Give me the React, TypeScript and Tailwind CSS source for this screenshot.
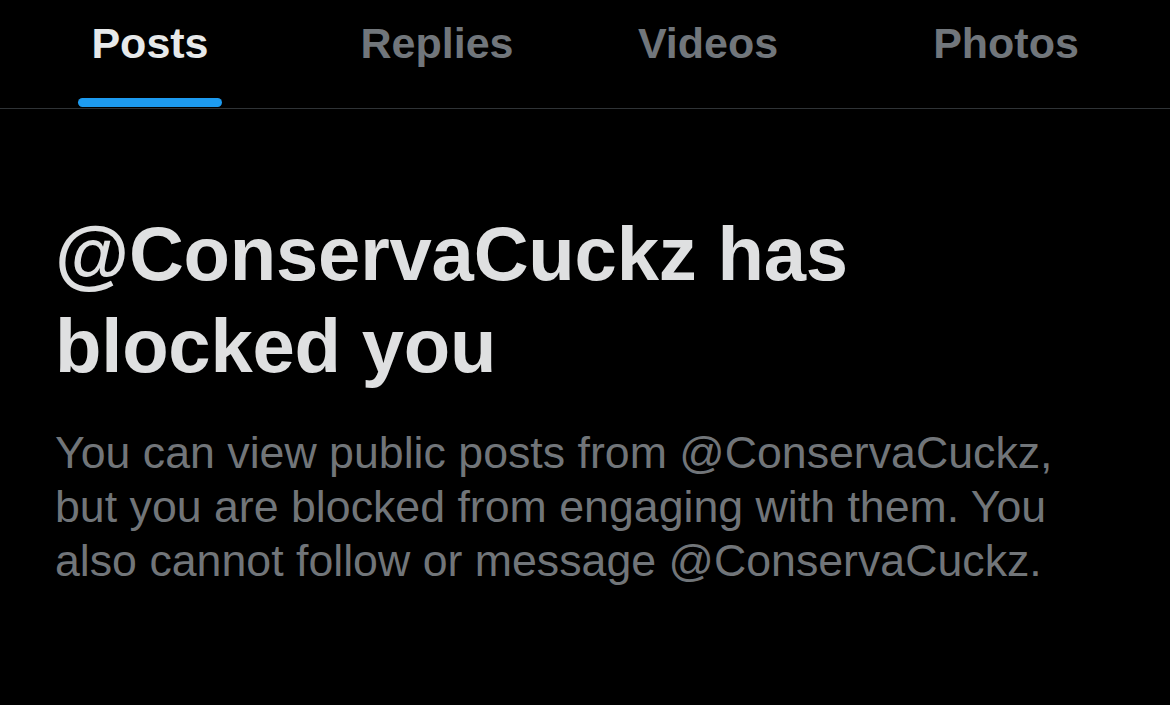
import React from 'react';

const tabs = [
  { label: 'Posts', width: 'w-[300px]', active: true },
  { label: 'Replies', width: 'w-[274px]', active: false },
  { label: 'Videos', width: 'w-[268px]', active: false },
  { label: 'Photos', width: 'flex-1', active: false },
];

const handle = '@ConservaCuckz';

export default function App() {
  return (
    <div className="w-[1170px] h-[705px] bg-black overflow-hidden font-['Liberation_Sans',Arial,sans-serif]">
      {/* Profile tabs */}
      <div className="flex h-[109px] border-b border-[#2f3336]">
        {tabs.map((tab) => (
          <div key={tab.label} className={`${tab.width} flex flex-col items-center justify-between`}>
            <span
              className={`pt-[22px] text-[43px] leading-none font-bold ${
                tab.active ? 'text-[#e7e9ea]' : 'text-[#71767b]'
              }`}
            >
              {tab.label}
            </span>
            {tab.active ? (
              <div className="w-[144px] h-[9px] mb-[1px] rounded-full bg-[#1d9bf0]" />
            ) : (
              <div className="h-[9px]" />
            )}
          </div>
        ))}
      </div>

      {/* Blocked notice */}
      <div className="px-[55px] pt-[99px]">
        <h1 className="text-[76px] leading-[92px] font-bold text-[#dfe0e1] tracking-[-0.2px]">
          {handle} has
          <br />
          blocked you
        </h1>
        <p className="mt-[34px] text-[44.7px] leading-[54px] text-[#717579]">
          You can view public posts from {handle},
          <br />
          but you are blocked from engaging with them. You
          <br />
          also cannot follow or message {handle}.
        </p>
      </div>
    </div>
  );
}
